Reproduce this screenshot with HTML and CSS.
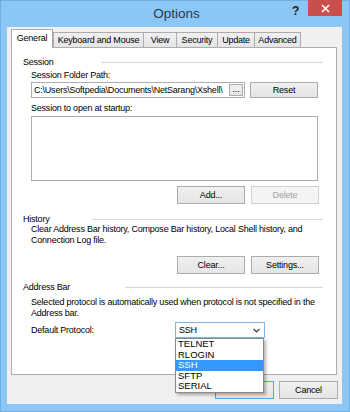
FILE: index.html
```html
<!DOCTYPE html>
<html lang="en">

<head>
    <meta charset="utf-8">
    <meta name="viewport" content="width=device-width, initial-scale=1.0">
    <title>Options</title>
    <link rel="stylesheet" href="styles.css">
</head>

<body>
    <div class="window">
        <header class="titlebar">
            <span></span>
            <h1>Options</h1>
            <div class="caption-buttons">
                <span class="help">?</span>
                <span class="close">
                    <svg width="9" height="9" viewBox="0 0 9 9">
                        <path d="M1 1 L8 8 M8 1 L1 8" stroke="#fff" stroke-width="1.6" fill="none" />
                    </svg>
                </span>
            </div>
        </header>

        <div class="client">
            <nav class="tabs">
                <span class="tab valgt t-general">General</span>
                <span class="tab t-keyboard">Keyboard and Mouse</span>
                <span class="tab t-view">View</span>
                <span class="tab t-security">Security</span>
                <span class="tab t-update">Update</span>
                <span class="tab last t-advanced">Advanced</span>
            </nav>

            <section class="panel">
                <div class="group-head">
                    <span class="group-label w-session">Session</span>
                    <span class="group-line"></span>
                </div>
                <div class="indent">
                    <p class="label lbl-path">Session Folder Path:</p>
                    <div class="row path-row">
                        <div class="path-box">
                            <span class="path-text">C:\Users\Softpedia\Documents\NetSarang\Xshell\</span>
                            <span class="browse">...</span>
                        </div>
                        <button class="btn">Reset</button>
                    </div>
                    <p class="label lbl-startup">Session to open at startup:</p>
                    <div class="listbox"></div>
                    <div class="row right-buttons add-row">
                        <button class="btn">Add...</button>
                        <button class="btn disabled">Delete</button>
                    </div>
                </div>

                <div class="group-head history-head">
                    <span class="group-label w-history">History</span>
                    <span class="group-line"></span>
                </div>
                <div class="indent">
                    <p class="desc">Clear Address Bar history, Compose Bar history, Local Shell history, and<br>Connection Log file.</p>
                    <div class="row right-buttons clear-row">
                        <button class="btn">Clear...</button>
                        <button class="btn">Settings...</button>
                    </div>
                </div>

                <div class="group-head address-head">
                    <span class="group-label w-address">Address Bar</span>
                    <span class="group-line"></span>
                </div>
                <div class="indent">
                    <p class="desc address-desc">Selected protocol is automatically used when protocol is not specified in the<br>Address bar.</p>
                    <div class="row protocol-row">
                        <span class="protocol-label">Default Protocol:</span>
                        <div class="combo">
                            <span>SSH</span>
                            <svg width="7" height="5" viewBox="0 0 7 5">
                                <polyline points="0.5,0.8 3.5,3.8 6.5,0.8" stroke="#333" stroke-width="1.2" fill="none" />
                            </svg>
                            <ul class="dropdown">
                                <li>TELNET</li>
                                <li>RLOGIN</li>
                                <li class="selected">SSH</li>
                                <li>SFTP</li>
                                <li>SERIAL</li>
                            </ul>
                        </div>
                    </div>
                </div>
            </section>

            <footer class="dialog-buttons">
                <button class="btn default">OK</button>
                <button class="btn">Cancel</button>
            </footer>
        </div>
    </div>
</body>

</html>
```

FILE: styles.css
```css
* {
    margin: 0px;
    padding: 0px;
    box-sizing: border-box;
}

body {
    font-family: 'Liberation Sans', Arial, sans-serif;
    font-size: 9px;
    letter-spacing: -0.22px;
    color: #000;
    background-color: #8cc6f4;
}

.window {
    width: 350px;
    height: 412px;
    background-color: #8cc6f4;
    border: 1px solid #6fafe6;
    display: flex;
    flex-direction: column;
}

/* title bar */

.titlebar {
    height: 26px;
    display: grid;
    grid-template-columns: 1fr auto 1fr;
}

.titlebar h1 {
    font-weight: normal;
    font-size: 13.5px;
    letter-spacing: 0px;
    color: #2a3a4a;
    padding-top: 5px;
    padding-left: 3px;
}

.caption-buttons {
    display: flex;
    justify-content: flex-end;
    align-items: flex-start;
}

.help {
    font-size: 12px;
    font-weight: bold;
    color: #222;
    padding-top: 3px;
    margin-right: 9px;
}

.close {
    width: 34px;
    height: 16px;
    margin-top: -1px;
    margin-right: 7px;
    background-color: #c7504c;
    display: flex;
    justify-content: center;
    align-items: center;
}

/* client area */

.client {
    margin-left: 6px;
    margin-right: 7px;
    height: 377px;
    background-color: #f0f0f0;
    padding-top: 2px;
    padding-left: 4px;
}

.tabs {
    display: flex;
    align-items: flex-end;
    height: 18px;
}

.tab {
    height: 15px;
    border: 1px solid #acacac;
    border-right: none;
    border-bottom: none;
    background: linear-gradient(#f0f0f0, #e5e5e5);
    text-align: center;
    line-height: 14px;
    white-space: nowrap;
}

.tab.last {
    border-right: 1px solid #acacac;
}

.tab.valgt {
    height: 19px;
    margin-bottom: -1px;
    background: #fff;
    border-right: 1px solid #acacac;
    position: relative;
    z-index: 1;
    line-height: 16px;
}

.t-general { width: 42px; }
.t-keyboard { width: 90px; }
.t-view { width: 33px; }
.t-security { width: 41px; }
.t-update { width: 37px; }
.t-advanced { width: 47px; }

.panel {
    width: 326px;
    height: 328px;
    background-color: #fff;
    border: 1px solid #adadad;
    padding-top: 8px;
    padding-left: 11px;
    padding-right: 13px;
}

.group-head {
    display: flex;
    align-items: center;
    height: 12px;
    line-height: 12px;
}

.group-label {
    flex: none;
}

.w-session { width: 78px; }
.w-history { width: 69px; }
.w-address { width: 102px; }

.group-line {
    flex: 1;
    height: 1px;
    margin-top: 1px;
    background-color: #d7d7d7;
}

.indent {
    margin-left: 8px;
    margin-right: 5px;
}

.label {
    line-height: 12px;
}

.lbl-path {
    margin-top: 1px;
}

.row {
    display: flex;
    gap: 5px;
}

.path-row {
    margin-top: 1px;
    height: 16px;
}

.path-box {
    width: 214px;
    height: 16px;
    border: 1px solid #abadb3;
    display: flex;
    align-items: center;
    padding-left: 2px;
    padding-right: 1px;
    overflow: hidden;
}

.path-text {
    flex: 1;
    white-space: nowrap;
}

.browse {
    flex: none;
    width: 14px;
    height: 12px;
    border: 1px solid #acacac;
    background: linear-gradient(#f0f0f0, #e5e5e5);
    text-align: center;
    line-height: 8px;
}

.btn {
    font-family: inherit;
    font-size: 9px;
    letter-spacing: -0.2px;
    color: #000;
    width: 68px;
    height: 18px;
    border: 1px solid #acacac;
    background: linear-gradient(#f0f0f0, #e5e5e5);
}

.path-row .btn {
    height: 16px;
}

.btn.disabled {
    color: #a3a3a3;
    border-color: #d0d0d0;
    background: #f4f4f4;
}

.lbl-startup {
    margin-top: 4px;
}

.listbox {
    margin-top: 2px;
    height: 65px;
    border: 1px solid #abadb3;
}

.right-buttons {
    justify-content: flex-end;
    gap: 6px;
    margin-right: -1px;
}

.add-row {
    margin-top: 5px;
}

.history-head {
    margin-top: 9px;
    height: 11px;
}

.desc {
    line-height: 11px;
}

.clear-row {
    margin-top: 10px;
}

.address-head {
    margin-top: 7px;
    height: 11px;
}

.address-desc {
    margin-top: 5px;
}

.protocol-row {
    margin-top: 3px;
    align-items: center;
    gap: 0px;
}

.protocol-label {
    width: 144px;
}

.combo {
    position: relative;
    width: 90px;
    height: 16px;
    border: 1px solid #7eb4ea;
    background-color: #fff;
    display: flex;
    align-items: center;
    justify-content: space-between;
    padding-left: 3px;
    padding-right: 4px;
}

.dropdown {
    position: absolute;
    top: 15px;
    left: -1px;
    width: 89px;
    border: 1px solid #8a8a8a;
    background-color: #fff;
    list-style: none;
    box-shadow: 2px 2px 3px rgba(0, 0, 0, 0.3);
    z-index: 2;
}

.dropdown li {
    height: 10.5px;
    line-height: 10.5px;
    padding-left: 2px;
    font-size: 9.5px;
    letter-spacing: 0px;
}

.dropdown li.selected {
    background-color: #3399ff;
    color: #fff;
}

/* OK / Cancel */

.dialog-buttons {
    display: flex;
    justify-content: flex-end;
    gap: 5px;
    margin-top: 6px;
    width: 327px;
}

.dialog-buttons .btn {
    width: 59px;
}

.btn.default {
    border-color: #5aa0e6;
}
```
